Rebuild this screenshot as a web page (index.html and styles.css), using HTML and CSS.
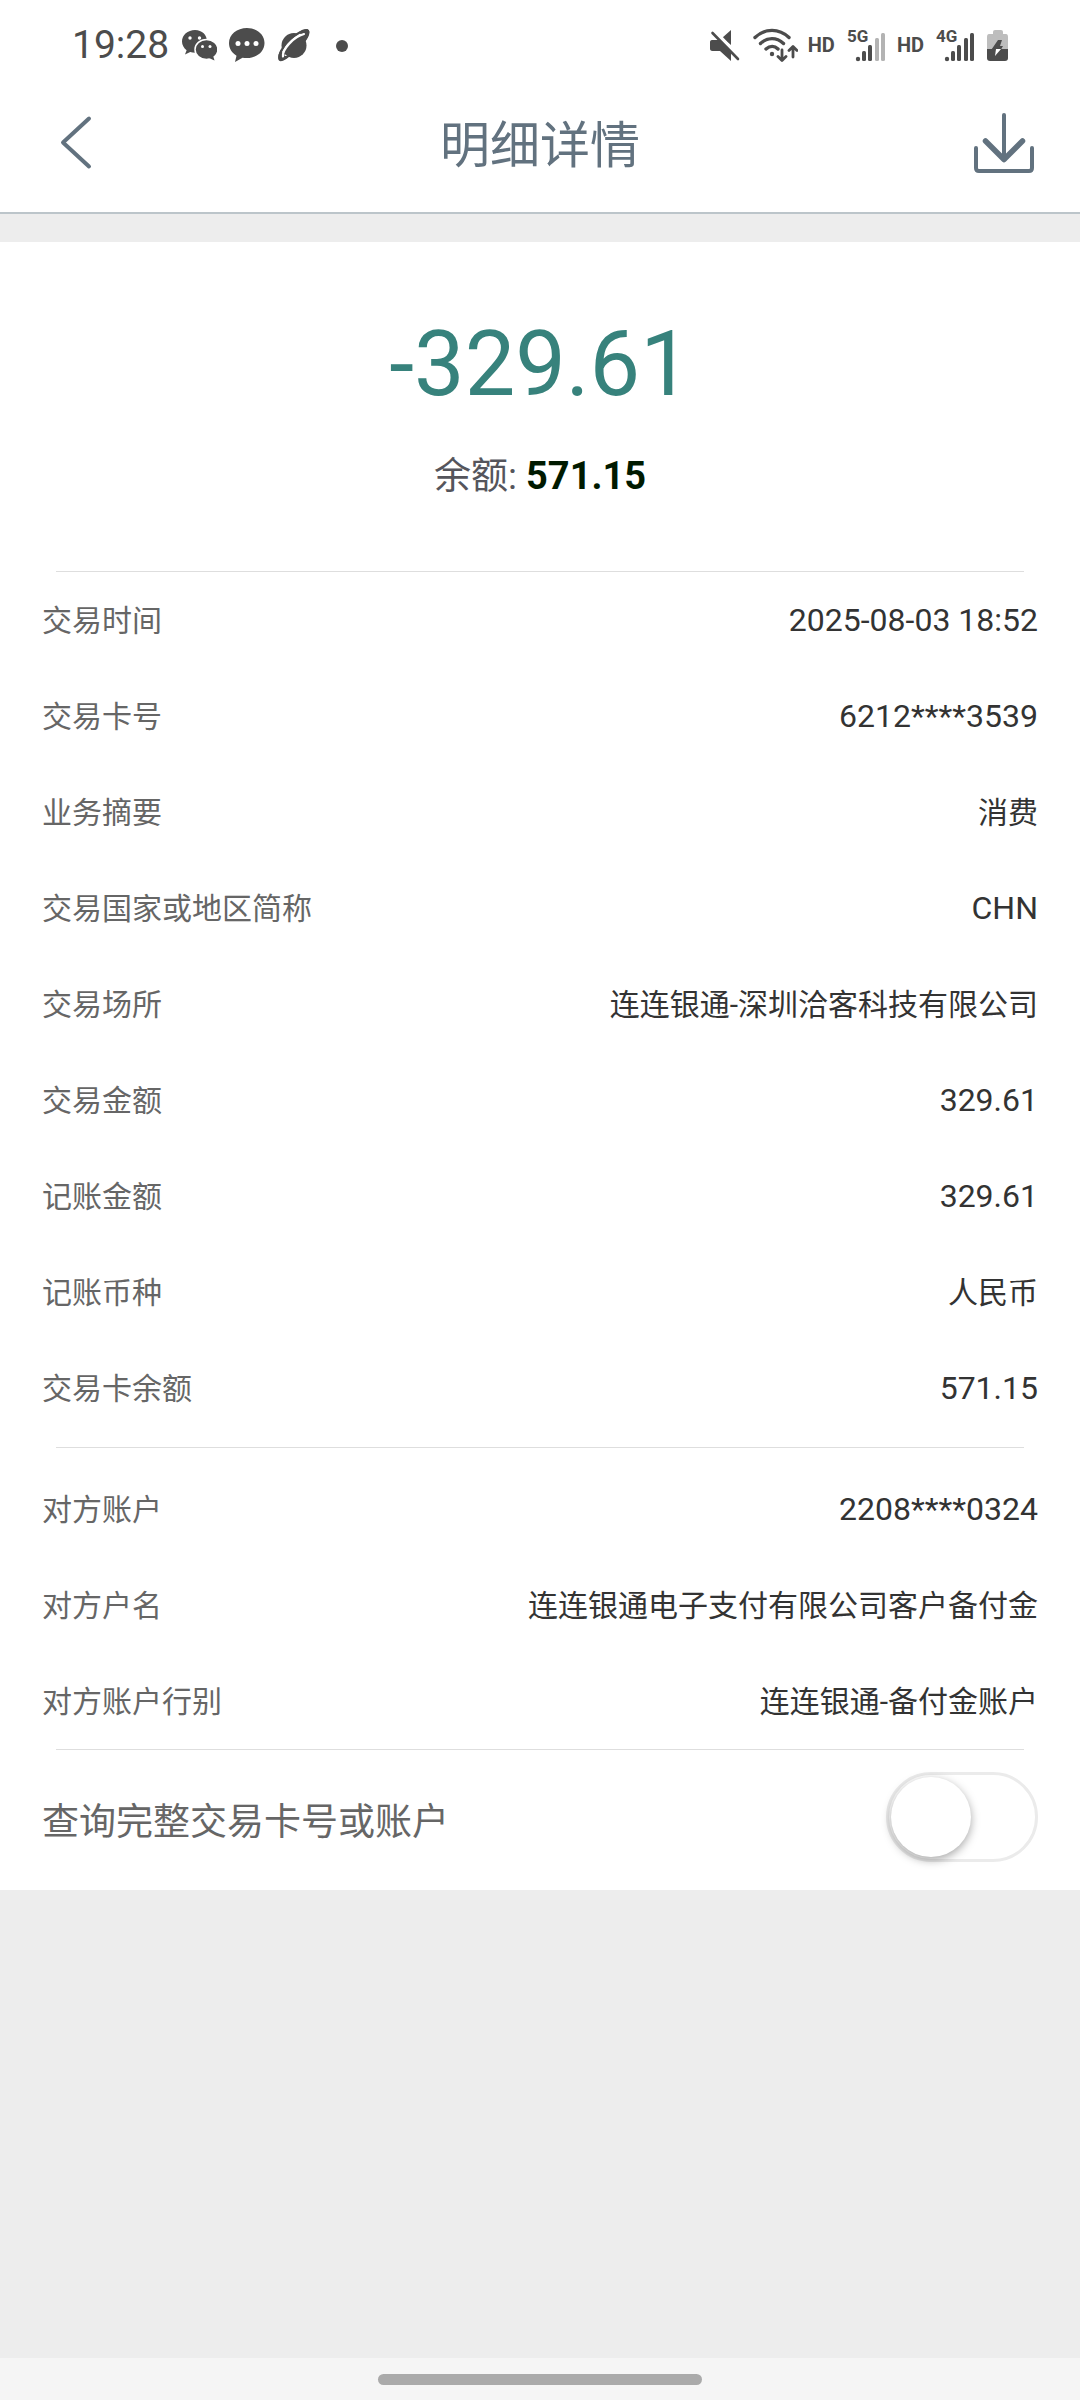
FILE: index.html
```html
<!DOCTYPE html>
<html lang="zh-CN">
<head>
  <meta charset="UTF-8">
  <meta name="viewport" content="width=device-width, initial-scale=1.0">
  <title>明细详情</title>
  <link rel="stylesheet" href="styles.css">
</head>
<body>
  <div class="status-bar">
    <div class="status-left">
      <span class="time">19:28</span>
      <svg width="36" height="36" viewBox="0 0 36 36">
        <path fill="#4c4c4c" d="M14 3C6.800 3 1 8 1 14.500c0 3.500 1.800 6.600 4.600 8.700L4 27.500l5.200-2.600c1.500.5 3.200.8 4.800.8 7.200 0 12-4.700 12-11.200S21.200 3 14 3z"/>
        <ellipse cx="25.500" cy="22.500" rx="11.500" ry="10" fill="#4c4c4c" stroke="#fff" stroke-width="1.500"/>
        <path fill="#4c4c4c" d="M28 31l5.500 2.500-1.500-5z"/>
        <g fill="#fff">
          <circle cx="9" cy="11" r="1.700"/>
          <circle cx="18.500" cy="11" r="1.700"/>
          <circle cx="21.500" cy="19.500" r="1.500"/>
          <circle cx="29" cy="19.500" r="1.500"/>
        </g>
      </svg>
      <svg width="36" height="36" viewBox="0 0 36 36">
        <path fill="#4c4c4c" d="M18 1C8 1 0 7.500 0 16c0 5.500 3 10 7.500 12.700L6 35l7.500-4.300c1.500.3 3 .3 4.500.3 10 0 17.500-6.500 17.500-15S28 1 18 1z"/>
        <g fill="#fff">
          <circle cx="9" cy="16.500" r="2.500"/>
          <circle cx="18" cy="16.500" r="2.500"/>
          <circle cx="27" cy="16.500" r="2.500"/>
        </g>
      </svg>
      <svg width="36" height="36" viewBox="0 0 36 36">
        <circle cx="17" cy="18.500" r="12.500" fill="#4c4c4c"/>
        <path fill="#fff" stroke="#4c4c4c" stroke-width="2.200" stroke-linejoin="round" d="M21 6.500C26 3.500 30 2.500 31 4c1 2-1 6.500-4 10.500C28 9 26 9 22 10.500 15 13.500 8 21 6 29c0 2 2 2 5.500 0C7 33 3.500 34 2.500 32.500c-1-3 1-8 4.500-13 3.500-5.500 9-10 14-13z"/>
        <path fill="#4c4c4c" d="M22 5c5-3 9-3.500 10-1.500s-.5 6-3.500 10.500L25 9zM1.700 32c-1-2.500 0-6 2.500-10l2 6 5 2c-4 3.500-8.500 4.500-9.500 2z"/>
        <path fill="none" stroke="#fff" stroke-width="2.200" stroke-linecap="round" d="M6 29.500C5 23 16 10 27 7"/>
      </svg>
      <svg width="36" height="36" viewBox="0 0 36 36">
        <circle cx="17" cy="19" r="6" fill="#4c4c4c"/>
      </svg>
    </div>
    <div class="status-right">
      <svg width="32" height="36" viewBox="0 0 32 36">
        <path fill="#4c4c4c" d="M2 13h7L21 24v10L10 24H2.500C.5 24 0 23 0 21.500v-6C0 14 .5 13 2 13zM12 11l9-8v15z"/>
        <path stroke="#fff" stroke-width="3" d="M4 3l25 26"/>
        <path stroke="#4c4c4c" stroke-width="2.600" stroke-linecap="round" d="M2.500 6l25.500 26"/>
      </svg>
      <svg width="46" height="36" viewBox="0 0 46 36" fill="none" stroke="#4c4c4c" stroke-width="3.400" stroke-linecap="round">
        <path d="M3 10.500C13 1 27 1 37 10.500M8.500 16.500c7-6.500 16-6.500 23 0M14 22c4-3.500 8.500-3.500 12 0"/>
        <circle cx="20" cy="27" r="2.200" fill="#4c4c4c" stroke="none"/>
        <path stroke-width="2.800" stroke-linejoin="round" d="M30 23v10M26 29.500l4 4 4-4M41 30V20M37 23.500l4-4 4 4"/>
      </svg>
      <span class="hd">HD</span>
      <svg width="40" height="36" viewBox="0 0 40 36">
        <text class="net" x="0" y="15">5G</text>
        <g fill="#4c4c4c">
          <circle cx="11" cy="32" r="2.200"/>
          <rect x="15" y="24" width="4" height="10" rx="1.500"/>
          <rect x="21" y="18" width="4" height="16" rx="1.500"/>
        </g>
        <g fill="#b3b3b3">
          <rect x="28" y="11" width="4" height="23" rx="1.500"/>
          <rect x="34" y="6" width="4" height="28" rx="1.500"/>
        </g>
      </svg>
      <span class="hd">HD</span>
      <svg width="40" height="36" viewBox="0 0 40 36">
        <text class="net" x="0" y="15">4G</text>
        <g fill="#4c4c4c">
          <circle cx="11" cy="32" r="2.200"/>
          <rect x="15" y="24" width="4" height="10" rx="1.500"/>
          <rect x="21" y="18" width="4" height="16" rx="1.500"/>
          <rect x="28" y="11" width="4" height="23" rx="1.500"/>
          <rect x="34" y="6" width="4" height="28" rx="1.500"/>
        </g>
      </svg>
      <svg width="24" height="36" viewBox="0 0 24 36">
        <path fill="#bdbdbd" d="M7 5q0-2 2-2h6q2 0 2 2v2h3q2 0 2 3v13H1V10q0-3 2-3h4z"/>
        <path fill="#4c4c4c" d="M1 22h21v9q0 3-3 3H4q-3 0-3-3z"/>
        <path fill="#4c4c4c" d="M12 13h4l-2 6h3l-2 3.500H5.500z"/>
        <path fill="#fff" d="M10 22h5l-6 7z"/>
      </svg>
    </div>
  </div>

  <header class="header">
    <button type="button" class="icon-button" aria-label="返回">
      <svg width="64" height="64" viewBox="0 0 64 64" fill="none" stroke="#62727f" stroke-width="4" stroke-linecap="round" stroke-linejoin="round">
        <path d="M45 6.500l-26 24 26 24"/>
      </svg>
    </button>
    <h1>明细详情</h1>
    <button type="button" class="icon-button" aria-label="下载">
      <svg width="64" height="64" viewBox="0 0 64 64" fill="none" stroke="#62727f" stroke-width="4" stroke-linecap="round" stroke-linejoin="round">
        <path d="M32 3v44"/>
        <path stroke-width="5.500" d="M13.500 29L32 47.500 50.500 29"/>
        <path d="M4 36v20q0 3 3 3h50q3 0 3-3V36"/>
      </svg>
    </button>
  </header>

  <main class="card">
    <section class="summary">
      <p class="amount">-329.61</p>
      <p class="balance">余额: <strong>571.15</strong></p>
    </section>

    <dl class="details">
      <div class="row"><dt>交易时间</dt><dd class="num">2025-08-03 18:52</dd></div>
      <div class="row"><dt>交易卡号</dt><dd class="num">6212****3539</dd></div>
      <div class="row"><dt>业务摘要</dt><dd>消费</dd></div>
      <div class="row"><dt>交易国家或地区简称</dt><dd class="num">CHN</dd></div>
      <div class="row"><dt>交易场所</dt><dd>连连银通-深圳洽客科技有限公司</dd></div>
      <div class="row"><dt>交易金额</dt><dd class="num">329.61</dd></div>
      <div class="row"><dt>记账金额</dt><dd class="num">329.61</dd></div>
      <div class="row"><dt>记账币种</dt><dd>人民币</dd></div>
      <div class="row"><dt>交易卡余额</dt><dd class="num">571.15</dd></div>
    </dl>

    <dl class="details account">
      <div class="row"><dt>对方账户</dt><dd class="num">2208****0324</dd></div>
      <div class="row"><dt>对方户名</dt><dd>连连银通电子支付有限公司客户备付金</dd></div>
      <div class="row"><dt>对方账户行别</dt><dd>连连银通-备付金账户</dd></div>
    </dl>

    <div class="toggle-row">
      <label for="show-full">查询完整交易卡号或账户</label>
      <input type="checkbox" id="show-full" class="switch" role="switch">
    </div>
  </main>

  <div class="nav-bar"><span class="nav-pill"></span></div>
</body>
</html>
```
FILE: styles.css
```css
* {
  box-sizing: border-box;
}
body {
  margin: 0;
  min-height: 100vh;
  display: flex;
  flex-direction: column;
  background-color: #ededed;
  font-family: Roboto, "Noto Sans CJK SC", sans-serif;
  color: #333;
}
h1, p, dl, dd {
  margin: 0;
}
svg {
  display: block;
  flex-shrink: 0;
}

/* system status bar */
.status-bar {
  display: flex;
  justify-content: space-between;
  align-items: center;
  height: 90px;
  padding: 0 70px 0 72px;
  background-color: #fff;
  color: #4c4c4c;
}
.status-left,
.status-right {
  display: flex;
  align-items: center;
}
.status-left {
  gap: 12px;
}
.status-right {
  gap: 10px;
}
.time {
  font-size: 39px;
}
.hd {
  margin-right: 2px;
  font-size: 20px;
  font-weight: 700;
}
.net {
  font-size: 17px;
  font-weight: 700;
  fill: #4c4c4c;
}

/* page header */
.header {
  display: flex;
  justify-content: space-between;
  align-items: center;
  height: 124px;
  padding: 0 44px 14px;
  background-color: #fff;
  border-bottom: 2px solid #bcc5ca;
}
.header h1 {
  padding-top: 4px;
  font-size: 50px;
  font-weight: 400;
  line-height: 72px;
  color: #62727f;
}
.icon-button {
  display: flex;
  width: 64px;
  padding: 0;
  border: none;
  background: none;
  cursor: pointer;
}

.card {
  margin-top: 28px;
  background-color: #fff;
}
.summary {
  padding: 70px 0 64px;
  text-align: center;
}
.amount {
  font-size: 90px;
  line-height: 106px;
  color: #37827c;
}
.balance {
  margin-top: 28px;
  font-size: 37px;
  line-height: 60px;
  color: #55555c;
}
.balance strong {
  font-size: 38px;
  color: #001a00;
}

.details::before,
.toggle-row::before {
  content: "";
  display: block;
  height: 1px;
  margin: 0 14px;
  background-color: #dedede;
}
.details {
  padding: 0 42px;
}
.row {
  display: flex;
  justify-content: space-between;
  align-items: center;
  height: 96px;
  font-size: 30px;
}
.row dt,
.row dd {
  padding-bottom: 4px;
}
.row dt {
  color: #666;
}
.row .num {
  padding-bottom: 0;
  font-size: 32px;
}
.account {
  margin-top: 11px;
}
.account::before {
  margin-bottom: 13px;
}

.toggle-row {
  display: flex;
  flex-wrap: wrap;
  justify-content: space-between;
  align-items: center;
  padding: 0 42px 28px;
  font-size: 37px;
  color: #666;
}
.toggle-row label {
  padding-top: 4px;
}
.toggle-row::before {
  flex: 1 0 90%;
  margin-bottom: 22px;
}
.switch {
  appearance: none;
  width: 152px;
  height: 90px;
  margin: 0;
  padding: 2px;
  border: 3px solid #ebebeb;
  border-radius: 45px;
  background-color: #fff;
  cursor: pointer;
}
.switch::before {
  content: "";
  display: block;
  width: 80px;
  height: 80px;
  border-radius: 50%;
  background-color: #fff;
  box-shadow: 0 3px 10px rgba(0, 0, 0, 0.35);
}
.switch:checked {
  background-color: #37827c;
}
.switch:checked::before {
  margin-left: auto;
}

/* gesture bar */
.nav-bar {
  display: flex;
  justify-content: center;
  align-items: center;
  height: 42px;
  margin-top: auto;
  background-color: #f5f5f5;
}
.nav-pill {
  width: 30%;
  height: 11px;
  border-radius: 6px;
  background-color: #aaa;
}
```
